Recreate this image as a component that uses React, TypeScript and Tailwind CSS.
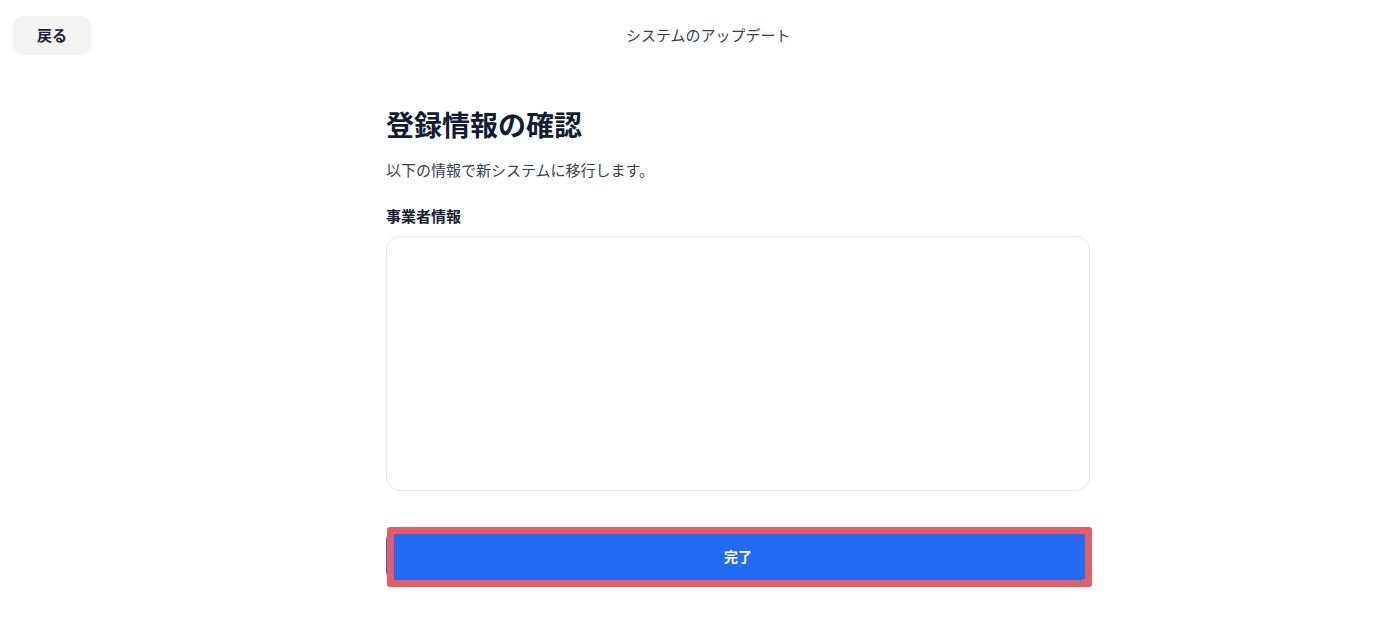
import React from "react";

export default function App() {
  return (
    <div
      className="min-h-screen w-full bg-white"
      style={{ fontFamily: '"Noto Sans CJK JP", "Noto Sans", sans-serif' }}
    >
      <header className="flex items-center pt-[16px] pl-[13px]">
        <button className="flex h-[39px] w-[78px] items-center justify-center rounded-[10px] bg-[#f3f3f2] text-[15px] font-bold text-[#1a2035]">
          戻る
        </button>
        <div className="ml-[535px] -mt-[1px] text-[15px] leading-[22px] text-[#3a4152]">
          システムのアップデート
        </div>
      </header>

      <main className="ml-[386px] w-[704px]">
        <h1 className="mt-[50px] text-[28px] font-bold leading-[39px] text-[#141c33]">
          登録情報の確認
        </h1>
        <p className="mt-[15px] text-[15px] leading-[22px] text-[#394152]">
          以下の情報で新システムに移行します。
        </p>
        <div className="mt-[24px] text-[15px] font-bold leading-[22px] text-[#1a2035]">
          事業者情報
        </div>
        <div className="mt-[9px] h-[255px] rounded-[14px] border border-[#e6e7ea] bg-white" />
        <div className="relative mt-[41px]">
          <button className="flex h-[48px] w-full items-center justify-center rounded-[8px] bg-[#236af5] text-[14px] font-bold text-white">
            完了
          </button>
          <div className="pointer-events-none absolute left-[1px] top-[-5px] h-[60px] w-[705px] rounded-[3px] border-[7px] border-[#e45e68]" />
        </div>
      </main>
    </div>
  );
}
